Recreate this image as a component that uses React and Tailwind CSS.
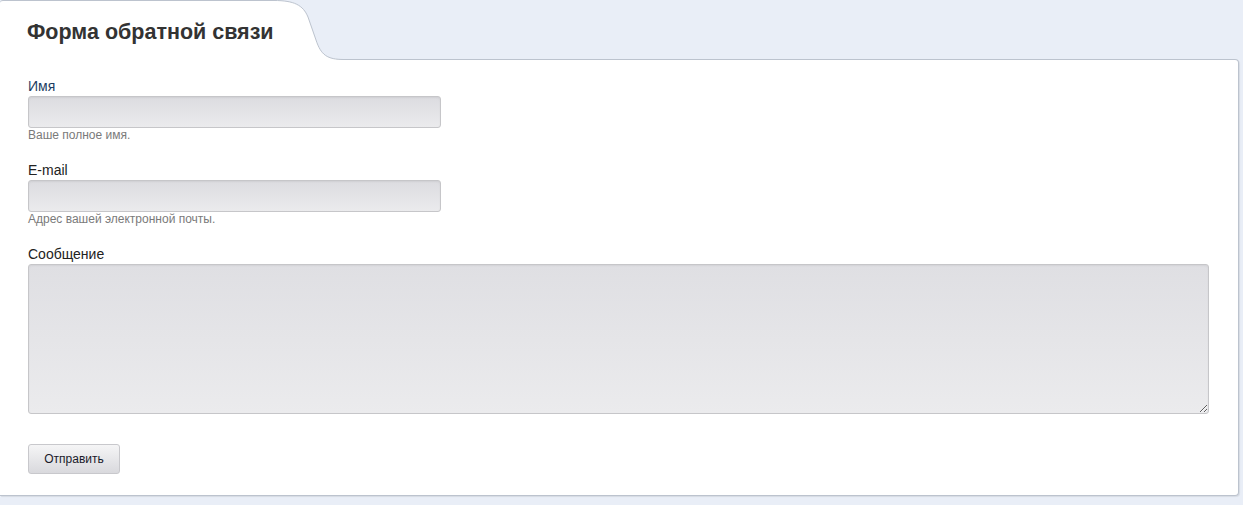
import React from 'react';

const Field = ({ label, hint, labelClass = 'text-[#222]' }) => (
    <div className="mb-5">
        <label className={`block text-[14px] leading-4 mb-[2px] ${labelClass}`}>{label}</label>
        <input
            type="text"
            className="block w-[413px] h-8 rounded-[3px] border border-[#c6c6c9] bg-gradient-to-b from-[#dcdce0] to-[#ebebed] shadow-[inset_0_1px_2px_rgba(0,0,0,0.06)] outline-none"
        />
        <div className="text-[12px] leading-[14px] text-[#7a7a7a]">{hint}</div>
    </div>
);

const App = () => {
    return (
        <div className="min-h-[505px] bg-[#e9eef7] pr-[4px] font-['Liberation_Sans',Arial,sans-serif]">
            {/* tab header */}
            <div className="relative z-10 flex h-[60px] -mb-px">
                <div className="w-[274px] bg-white border-t border-[#bcc3ce] rounded-tl-[3px] pl-[27px] pt-[19px]">
                    <h1 className="relative z-10 text-[21.5px] leading-6 font-bold text-[#333] whitespace-nowrap">Форма обратной связи</h1>
                </div>
                <svg width="70" height="60" viewBox="0 0 70 60" className="block">
                    <path d="M0 0.5 C20 0.5 29 5 34 17 L42 40 C47 55 53 59.5 70 59.5 L70 60 L0 60 Z" fill="#fff" />
                    <path d="M0 0.5 C20 0.5 29 5 34 17 L42 40 C47 55 53 59.5 70 59.5" fill="none" stroke="#bcc3ce" strokeWidth="1" />
                </svg>
            </div>

            {/* panel body */}
            <div className="bg-white border-t border-r border-b border-[#bcc3ce] rounded-tr-[4px] rounded-br-[4px] shadow-[1px_1px_1px_rgba(0,0,0,0.08)] pl-[28px] pr-[29px] pt-[18px] pb-[21px]">
                <Field label="Имя" hint="Ваше полное имя." labelClass="text-[#1d3d63]" />
                <Field label="E-mail" hint="Адрес вашей электронной почты." />

                <div>
                    <label className="block text-[14px] leading-4 mb-[2px] text-[#222]">Сообщение</label>
                    <textarea
                        className="block w-full h-[150px] rounded-[3px] border border-[#c6c6c9] bg-gradient-to-b from-[#dfdfe3] to-[#ebebed] shadow-[inset_0_1px_2px_rgba(0,0,0,0.06)] outline-none resize-y"
                    />
                </div>

                <button className="mt-[30px] block w-[92px] h-[30px] rounded-[3px] border border-[#c8c8cc] bg-gradient-to-b from-[#f5f5f6] to-[#d9d9dd] text-[12px] text-[#1a1a2a]">
                    Отправить
                </button>
            </div>
        </div>
    );
};

export default App;
